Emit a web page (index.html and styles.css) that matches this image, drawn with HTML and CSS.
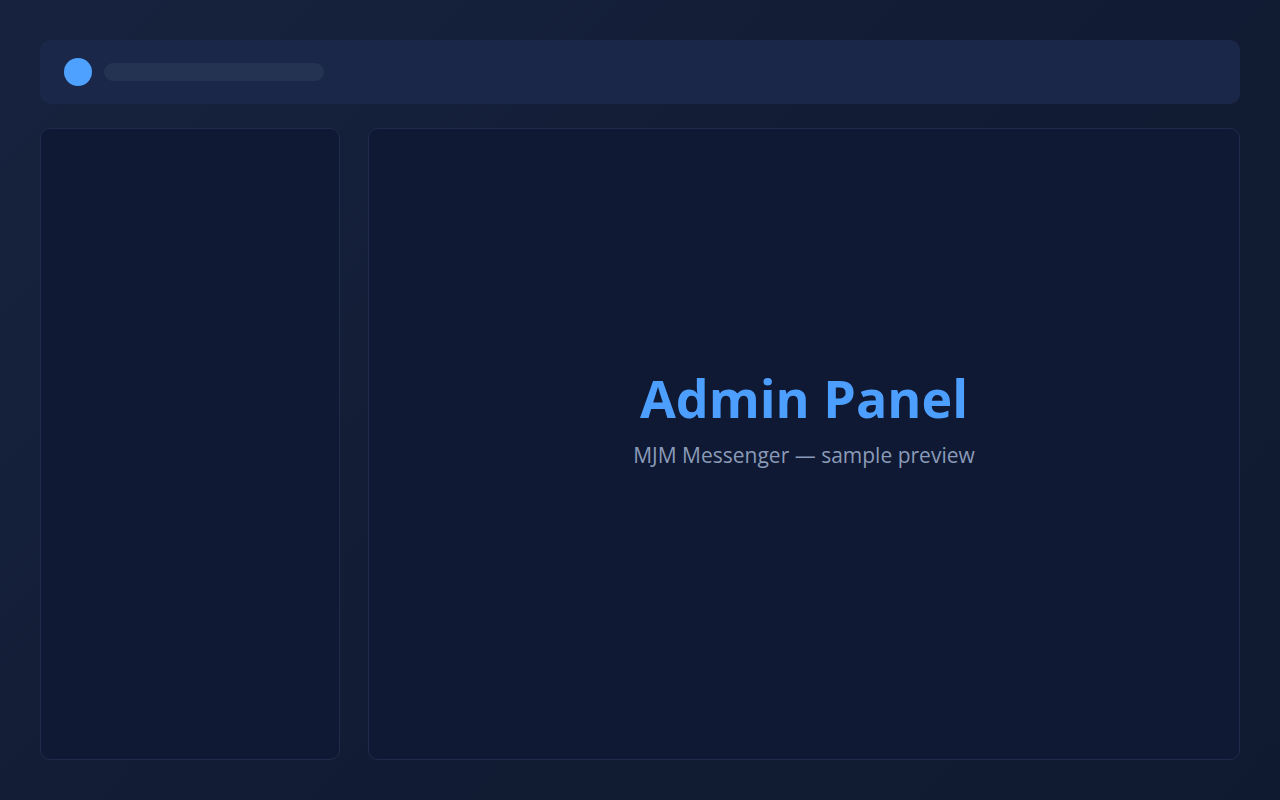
FILE: index.html
```html
<!DOCTYPE html>
<html lang="en">
<head>
    <meta charset="UTF-8">
    <meta name="viewport" content="width=device-width, initial-scale=1.0">
    <title>Admin Panel</title>
    <link rel="stylesheet" href="styles.css">
</head>
<body>
    <!-- Top bar -->
    <div class="top-bar">
        <div class="avatar"></div>
        <div class="search-placeholder"></div>
    </div>

    <!-- Sidebar + main area -->
    <div class="layout">
        <aside class="sidebar"></aside>
        <main class="main-panel">
            <div class="hero">
                <h1 class="hero-title">Admin Panel</h1>
                <p class="hero-sub">MJM Messenger — sample preview</p>
            </div>
        </main>
    </div>
</body>
</html>
```

FILE: styles.css
```css
/* Basic reset */
* {
    margin: 0;
    padding: 0;
    box-sizing: border-box;
}

html, body {
    height: 100%;
    overflow: hidden;
}

body {
    background: linear-gradient(135deg, #17223e 0%, #121c34 50%, #0f1a30 100%);
    font-family: 'Open Sans', 'Noto Sans', sans-serif;
    padding: 40px;
    display: flex;
    flex-direction: column;
    gap: 24px;
}

/* Top bar styling */
.top-bar {
    background-color: #1b2749;
    border-radius: 10px;
    height: 64px;
    display: flex;
    align-items: center;
    gap: 12px;
    padding: 0 24px;
}

.avatar {
    width: 28px;
    height: 28px;
    border-radius: 50%;
    background-color: #4ea1ff;
}

.search-placeholder {
    width: 220px;
    height: 18px;
    border-radius: 9px;
    background-color: #253352;
}

/* Layout */
.layout {
    flex: 1;
    display: grid;
    grid-template-columns: 300px 1fr;
    gap: 28px;
}

.sidebar, .main-panel {
    background-color: #0f1933;
    border: 1px solid #1f2b4b;
    border-radius: 10px;
}

.main-panel {
    display: flex;
    align-items: center;
    justify-content: center;
    padding-bottom: 52px;
}

/* Hero text */
.hero {
    text-align: center;
}

.hero-title {
    color: #4d9fff;
    font-size: 52px;
    font-weight: 700;
    line-height: 1.2;
}

.hero-sub {
    color: #8a9bb8;
    font-size: 21px;
    margin-top: 11px;
}
```
